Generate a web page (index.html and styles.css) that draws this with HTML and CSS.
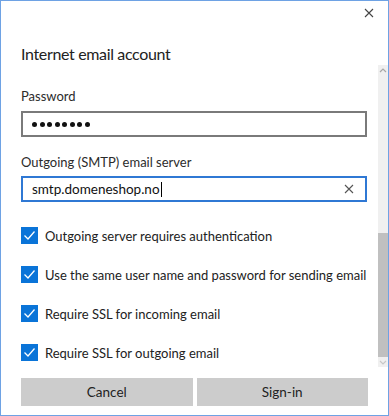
FILE: index.html
```html
<!DOCTYPE html>
<html lang="en">
<head>
<meta charset="UTF-8" />
<meta name="viewport" content="width=device-width, initial-scale=1" />
<title>Internet email account</title>
<link rel="stylesheet" href="styles.css">
</head>
<body>

<div class="window">
  <div class="topbar">
    <button class="close" aria-label="Close">
      <svg width="10" height="10" viewBox="0 0 10 10"><path d="M1 1 L9 9 M9 1 L1 9" stroke="#444" stroke-width="1.1" fill="none"/></svg>
    </button>
  </div>

  <h1 class="title">Internet email account</h1>

  <div class="scroll-area">
    <div class="content">
      <label class="field-label">Password</label>
      <div class="textbox">
        <span class="dots"><i></i><i></i><i></i><i></i><i></i><i></i><i></i><i></i></span>
      </div>

      <label class="field-label">Outgoing (SMTP) email server</label>
      <div class="textbox focused">
        <span class="value">smtp.domeneshop.no</span><span class="caret"></span>
        <svg class="clear" width="10" height="10" viewBox="0 0 10 10"><path d="M1 1 L9 9 M9 1 L1 9" stroke="#555" stroke-width="1.1" fill="none"/></svg>
      </div>

      <div class="check-row"><span class="checkbox"><svg width="17" height="17" viewBox="0 0 17 17"><path d="M3.5 8.5 L7 12 L13.5 4.5" stroke="#fff" stroke-width="1.3" fill="none"/></svg></span>Outgoing server requires authentication</div>
      <div class="check-row"><span class="checkbox"><svg width="17" height="17" viewBox="0 0 17 17"><path d="M3.5 8.5 L7 12 L13.5 4.5" stroke="#fff" stroke-width="1.3" fill="none"/></svg></span>Use the same user name and password for sending email</div>
      <div class="check-row"><span class="checkbox"><svg width="17" height="17" viewBox="0 0 17 17"><path d="M3.5 8.5 L7 12 L13.5 4.5" stroke="#fff" stroke-width="1.3" fill="none"/></svg></span>Require SSL for incoming email</div>
      <div class="check-row"><span class="checkbox"><svg width="17" height="17" viewBox="0 0 17 17"><path d="M3.5 8.5 L7 12 L13.5 4.5" stroke="#fff" stroke-width="1.3" fill="none"/></svg></span>Require SSL for outgoing email</div>
    </div>

    <div class="scrollbar">
      <div class="arrow"><svg width="8" height="5" viewBox="0 0 8 5"><path d="M1 4 L4 1 L7 4" stroke="#a8a8a8" stroke-width="1.2" fill="none"/></svg></div>
      <div class="track"></div>
      <div class="thumb"></div>
      <div class="arrow"><svg width="8" height="5" viewBox="0 0 8 5"><path d="M1 1 L4 4 L7 1" stroke="#c8c8c8" stroke-width="1.2" fill="none"/></svg></div>
    </div>
  </div>

  <div class="footer">
    <button class="button">Cancel</button>
    <button class="button">Sign-in</button>
  </div>
</div>

</body>
</html>
```

FILE: styles.css
```css
body {
  margin: 0;
  background: #fff;
  font-family: Lato, "Noto Sans", sans-serif;
  color: #1f1f1f;
}
.window {
  width: 389px;
  height: 416px;
  box-sizing: border-box;
  border: 1px solid #6ea2e4;
  display: flex;
  flex-direction: column;
}
.topbar {
  height: 24px;
  display: flex;
  justify-content: flex-end;
}
.close {
  width: 32px;
  height: 24px;
  border: none;
  background: none;
  padding: 0;
  display: flex;
  align-items: center;
  justify-content: center;
  margin-right: 3px;
}
.title {
  margin: 17px 0 0 20px;
  font-size: 16px;
  font-weight: 400;
  letter-spacing: -0.35px;
  line-height: 23px;
  color: #222;
}
.scroll-area {
  display: flex;
  height: 302px;
}
.content {
  flex: 1;
  min-width: 0;
  padding: 22px 11px 0 20px;
}
.field-label {
  display: block;
  font-size: 13px;
  line-height: 18px;
  color: #2b2b2b;
}
.textbox {
  height: 26px;
  box-sizing: border-box;
  border: 2px solid #7a7a7a;
  margin: 6px 0 16px;
  display: flex;
  align-items: center;
  padding: 0 9px;
  font-size: 13.5px;
  color: #111;
}
.textbox.focused {
  border-color: #2f78d4;
  margin-top: 5px;
  margin-bottom: 0;
}
.dots {
  display: flex;
  gap: 2.5px;
}
.dots i {
  width: 5px;
  height: 5px;
  border-radius: 50%;
  background: #111;
}
.caret {
  width: 1px;
  height: 15px;
  background: #000;
  margin-left: 1px;
}
.clear {
  margin-left: auto;
  margin-right: 2px;
}
.check-row {
  display: flex;
  align-items: center;
  height: 17px;
  margin-top: 22px;
  font-size: 13px;
  color: #222;
  white-space: nowrap;
}
.textbox.focused + .check-row {
  margin-top: 25px;
}
.checkbox {
  flex: none;
  width: 17px;
  height: 17px;
  background: #0a74d8;
  margin-right: 7px;
  display: flex;
}
.scrollbar {
  flex: none;
  width: 10px;
  background: #f0f0f0;
  display: flex;
  flex-direction: column;
}
.arrow {
  height: 10px;
  display: flex;
  align-items: center;
  justify-content: center;
}
.track {
  height: 158px;
}
.thumb {
  flex: 1;
  background: #c0c0c0;
}
.footer {
  display: flex;
  gap: 4px;
  padding: 11px 20px 0;
}
.button {
  flex: 1;
  height: 28px;
  border: none;
  background: #cccccc;
  font-family: Lato, "Noto Sans", sans-serif;
  font-size: 13.5px;
  color: #222;
}
```
